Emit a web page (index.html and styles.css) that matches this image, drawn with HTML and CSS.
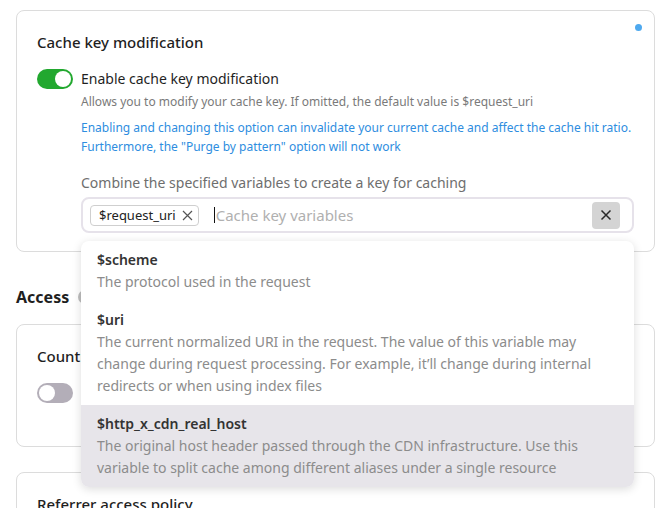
FILE: index.html
```html
<!DOCTYPE html>
<html lang="en">
<head>
<meta charset="utf-8">
<title>Cache key modification</title>
<link rel="stylesheet" href="styles.css">
</head>
<body>
<div class="page">
  <section class="card card-cache">
    <span class="dot"></span>
    <h3 class="card-title">Cache key modification</h3>
    <div class="toggle-row">
      <span class="switch on"><span class="knob"></span></span>
      <span class="toggle-label">Enable cache key modification</span>
    </div>
    <div class="toggle-desc">
      <p class="hint">Allows you to modify your cache key. If omitted, the default value is $request_uri</p>
      <p class="warn">Enabling and changing this option can invalidate your current cache and affect the cache hit ratio. Furthermore, the "Purge by pattern" option will not work</p>
    </div>
    <div class="field">
      <label class="field-label">Combine the specified variables to create a key for caching</label>
      <div class="select-wrap">
        <div class="select">
          <span class="tag">$request_uri
            <svg class="tag-x" width="11" height="11" viewBox="0 0 11 11"><path d="M1 1L10 10M10 1L1 10" stroke="#555" stroke-width="1.2" fill="none"/></svg>
          </span>
          <span class="caret"></span>
          <span class="placeholder">Cache key variables</span>
          <button class="clear" type="button">
            <svg width="12" height="12" viewBox="0 0 12 12"><path d="M1.5 1.5L10.5 10.5M10.5 1.5L1.5 10.5" stroke="#2a2a2a" stroke-width="1.5" fill="none"/></svg>
          </button>
        </div>
        <ul class="dropdown">
          <li class="opt">
            <div class="opt-name">$scheme</div>
            <div class="opt-desc">The protocol used in the request</div>
          </li>
          <li class="opt">
            <div class="opt-name">$uri</div>
            <div class="opt-desc">The current normalized URI in the request. The value of this variable may change during request processing. For example, it’ll change during internal redirects or when using index files</div>
          </li>
          <li class="opt active">
            <div class="opt-name">$http_x_cdn_real_host</div>
            <div class="opt-desc">The original host header passed through the CDN infrastructure. Use this variable to split cache among different aliases under a single resource</div>
          </li>
        </ul>
      </div>
    </div>
  </section>

  <h2 class="section-title">Access <span class="info"></span></h2>

  <section class="card card-country">
    <h3 class="card-title">Country access policy</h3>
    <div class="toggle-row">
      <span class="switch off"><span class="knob"></span></span>
    </div>
  </section>

  <section class="card card-referrer">
    <h3 class="card-title">Referrer access policy</h3>
  </section>
</div>
</body>
</html>
```

FILE: styles.css
```css
html, body {
  margin: 0;
  overflow: hidden;
  background: #fff;
}
body {
  font-family: "Noto Sans", "Open Sans", sans-serif;
  color: #1f1f1f;
}
.page {
  padding: 10px 15px 0 16px;
}
.card {
  position: relative;
  border: 1px solid #dcdcdc;
  border-radius: 8px;
  padding: 20px 20px 18px;
}
.dot {
  position: absolute;
  top: 13px;
  right: 12px;
  width: 7px;
  height: 7px;
  border-radius: 50%;
  background: #4ea9ef;
}
.card-title {
  margin: 0;
  font-size: 15px;
  font-weight: 500;
  line-height: 22px;
  color: #1f1f1f;
  white-space: nowrap;
}
.toggle-row {
  display: flex;
  align-items: center;
  gap: 8px;
  margin-top: 16px;
  height: 20px;
}
.switch {
  flex: none;
  box-sizing: border-box;
  width: 36px;
  height: 20px;
  border-radius: 10px;
  padding: 2px;
  display: flex;
  align-items: center;
}
.switch.on {
  background: #22a82f;
  justify-content: flex-end;
}
.switch.off {
  background: #b3aeb8;
  justify-content: flex-start;
}
.knob {
  width: 16px;
  height: 16px;
  border-radius: 50%;
  background: #fff;
}
.toggle-label {
  font-size: 14px;
  line-height: 20px;
}
.toggle-desc {
  margin: 3px 0 0 44px;
  font-size: 12px;
}
.hint {
  margin: 0;
  line-height: 20px;
  color: #7a7a7a;
}
.warn {
  margin: 6px 0 0;
  line-height: 19px;
  color: #2e8de0;
}
.field {
  margin: 17px 0 0 44px;
}
.field-label {
  display: block;
  font-size: 14px;
  line-height: 20px;
  color: #6e6e6e;
  margin-bottom: 4px;
}
.select-wrap {
  position: relative;
}
.select {
  box-sizing: border-box;
  height: 36px;
  border: 2px solid #e6e2ea;
  border-radius: 8px;
  display: flex;
  align-items: center;
  padding: 0 12px 0 7px;
}
.tag {
  display: inline-flex;
  align-items: center;
  gap: 6px;
  box-sizing: border-box;
  height: 21px;
  border: 1px solid #cfcfcf;
  border-radius: 4px;
  padding: 0 5px 0 8px;
  font-size: 13px;
  color: #222;
}
.caret {
  width: 1px;
  height: 16px;
  background: #111;
  margin-left: 15px;
}
.placeholder {
  margin-left: 1px;
  font-size: 15px;
  color: #b0b0b0;
}
.clear {
  margin-left: auto;
  width: 28px;
  height: 27px;
  padding: 0;
  border: 0;
  border-radius: 4px;
  background: #d4d4d4;
  display: flex;
  align-items: center;
  justify-content: center;
}
.dropdown {
  position: absolute;
  z-index: 5;
  top: 44px;
  left: 0;
  right: 0;
  margin: 0;
  padding: 0;
  list-style: none;
  background: #fff;
  border-radius: 8px;
  overflow: hidden;
  box-shadow: 0 2px 10px rgba(0, 0, 0, 0.14);
}
.opt {
  padding: 8px 16px;
}
.opt.active {
  background: #e7e5ea;
}
.opt-name {
  font-size: 14px;
  font-weight: 600;
  line-height: 22px;
  color: #333;
}
.opt-desc {
  font-size: 14px;
  line-height: 22px;
  color: #8c8c8c;
}
.section-title {
  display: flex;
  align-items: center;
  gap: 9px;
  margin: 33px 0 0;
  font-size: 16px;
  font-weight: 700;
  line-height: 24px;
  color: #1f1f1f;
}
.info {
  width: 14px;
  height: 14px;
  border-radius: 50%;
  background: #bdbdbd;
}
.card-country {
  margin-top: 15px;
  padding-bottom: 43px;
}
.card-referrer {
  margin-top: 25px;
  height: 80px;
}
```
